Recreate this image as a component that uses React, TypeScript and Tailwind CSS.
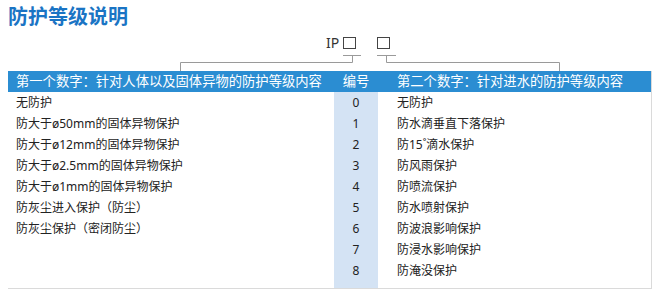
const firstDigit = [
  '无防护',
  '防大于ø50mm的固体异物保护',
  '防大于ø12mm的固体异物保护',
  '防大于ø2.5mm的固体异物保护',
  '防大于ø1mm的固体异物保护',
  '防灰尘进入保护（防尘）',
  '防灰尘保护（密闭防尘）',
];

const secondDigit = [
  '无防护',
  '防水滴垂直下落保护',
  '防15˚滴水保护',
  '防风雨保护',
  '防喷流保护',
  '防水喷射保护',
  '防波浪影响保护',
  '防浸水影响保护',
  '防淹没保护',
];

const codes = ['0', '1', '2', '3', '4', '5', '6', '7', '8'];

const App = () => {
  return (
    <div
      className="w-[665px] h-[289px] bg-white overflow-hidden text-[#222]"
      style={{ fontFamily: '"Noto Sans", "Noto Sans CJK SC", sans-serif' }}
    >
      {/* Title */}
      <div className="h-[32px] pl-2 pt-[3px]">
        <h2 className="text-[20px] leading-[28px] font-bold text-[#1a74c4]">防护等级说明</h2>
      </div>

      {/* IP □ □ */}
      <div className="h-[22px] flex items-center ml-[326px]">
        <span className="text-[14px] leading-none text-[#333]">IP</span>
        <span className="ml-[4px] w-[13px] h-[12px] border border-[#444]" />
        <span className="ml-[21px] w-[13px] h-[12px] border border-[#444]" />
      </div>

      {/* connector lines */}
      <svg width="665" height="17" className="block" fill="none" stroke="#9a9a9a" strokeWidth="1">
        <path d="M343 1.5H361M352.5 1.5V8.5M180.5 8.5H352.5M180.5 8.5V17" />
        <path d="M377 1.5H396M386.5 1.5V8.5M386.5 8.5H559.5M559.5 8.5V17" />
      </svg>

      {/* Table */}
      <div className="ml-2 w-[644px] border-r border-b border-[#dadada]">
        <div className="flex h-[21px] items-center bg-[#2b8dd2] text-white text-[13.3px] leading-none">
          <div className="w-[326px] pl-2">第一个数字：针对人体以及固体异物的防护等级内容</div>
          <div className="w-[44px] text-center">编号</div>
          <div className="flex-1 pl-[19px]">第二个数字：针对进水的防护等级内容</div>
        </div>
        <div className="flex text-[12px]">
          <div className="w-[326px] pl-2 pb-[7px]">
            {firstDigit.map((t) => (
              <div key={t} className="h-[21px] leading-[21px]">
                {t}
              </div>
            ))}
          </div>
          <div className="w-[44px] bg-[#d4e3f4] pb-[7px]">
            {codes.map((c) => (
              <div key={c} className="h-[21px] leading-[21px] text-center">
                {c}
              </div>
            ))}
          </div>
          <div className="flex-1 pl-[19px] pb-[7px]">
            {secondDigit.map((t) => (
              <div key={t} className="h-[21px] leading-[21px]">
                {t}
              </div>
            ))}
          </div>
        </div>
      </div>
    </div>
  );
};

export default App;
